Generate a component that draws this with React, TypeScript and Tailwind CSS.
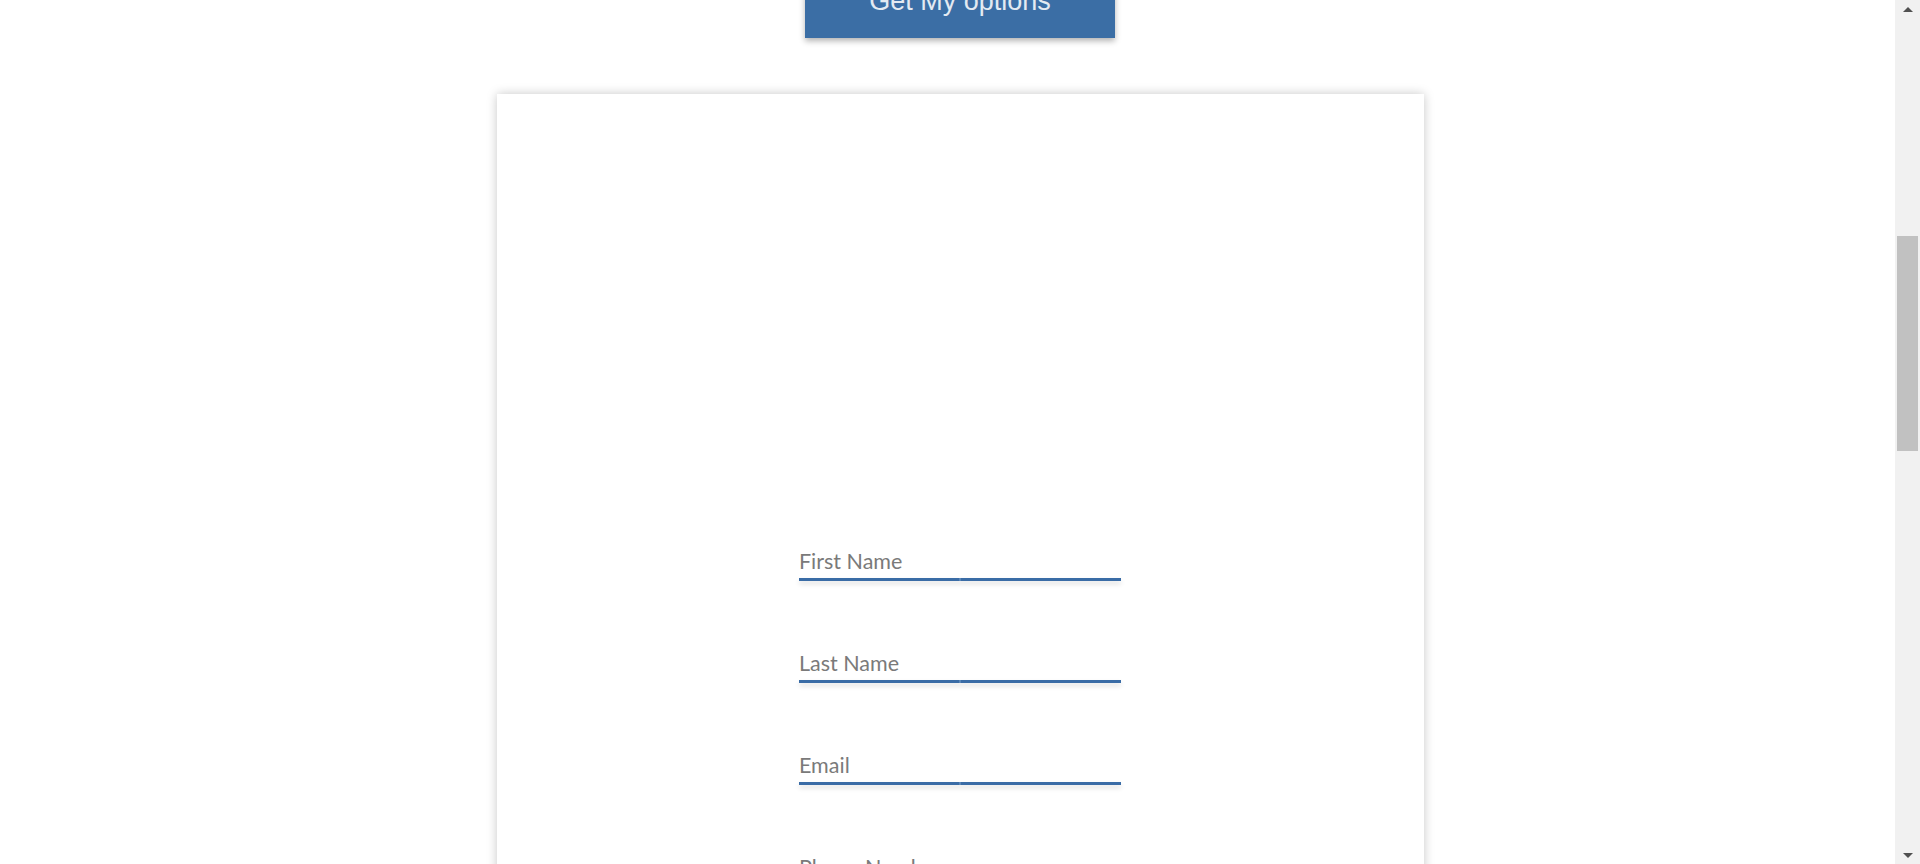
import React from 'react';

const fields = ['First Name', 'Last Name', 'Email', 'Phone Number'];

function Field({ label }: { label: string }) {
  return (
    <div className="w-[322px] flex flex-col">
      <input
        type="text"
        placeholder={label}
        className="h-[24px] w-full bg-transparent outline-none text-[21.5px] leading-[24px] font-normal text-[#555] placeholder:text-[#7a7a7a] font-['Lato','Noto_Sans',sans-serif] p-0"
      />
      <div className="mt-[5px] h-[3px] w-full flex shadow-[0_3px_5px_rgba(0,0,0,0.14)]">
        <div className="flex-1 bg-[#3a6ca6]" />
        <div className="w-[2px] bg-[#5a86b8]" />
        <div className="flex-1 bg-[#3a6ca6]" />
      </div>
    </div>
  );
}

export default function App() {
  return (
    <div className="h-screen w-full overflow-hidden bg-white relative">
      <div className="flex flex-col items-center">
        {/* CTA button, page is scrolled so its top is cut off */}
        <button
          type="button"
          className="-mt-[35px] h-[73px] w-[310px] bg-[#3b6ea5] text-[#e3eaf2] text-[27px] font-['Liberation_Sans',Arial,sans-serif] shadow-[0_3px_6px_rgba(0,0,0,0.3)] flex items-center justify-center"
        >
          Get My options
        </button>

        {/* Form card */}
        <div className="mt-[56px] w-[927px] bg-white shadow-[0_0_10px_rgba(0,0,0,0.22)] pt-[455px] pb-[120px] flex flex-col items-center gap-[70px]">
          {fields.map((f) => (
            <Field key={f} label={f} />
          ))}
        </div>
      </div>

      {/* Scrollbar */}
      <div className="absolute right-0 top-0 h-[864px] w-[25px] bg-[#f1f1f1] flex flex-col items-center">
        <div className="h-[17px] w-full flex items-center justify-center">
          <svg width="10" height="6" viewBox="0 0 10 6">
            <path d="M0 6 L5 1 L10 6 Z" fill="#505050" />
          </svg>
        </div>
        <div className="mt-[219px] h-[215px] w-[21px] bg-[#c1c1c1]" />
        <div className="flex-1" />
        <div className="h-[17px] w-full flex items-center justify-center">
          <svg width="10" height="6" viewBox="0 0 10 6">
            <path d="M0 0 L10 0 L5 5 Z" fill="#505050" />
          </svg>
        </div>
      </div>
    </div>
  );
}
